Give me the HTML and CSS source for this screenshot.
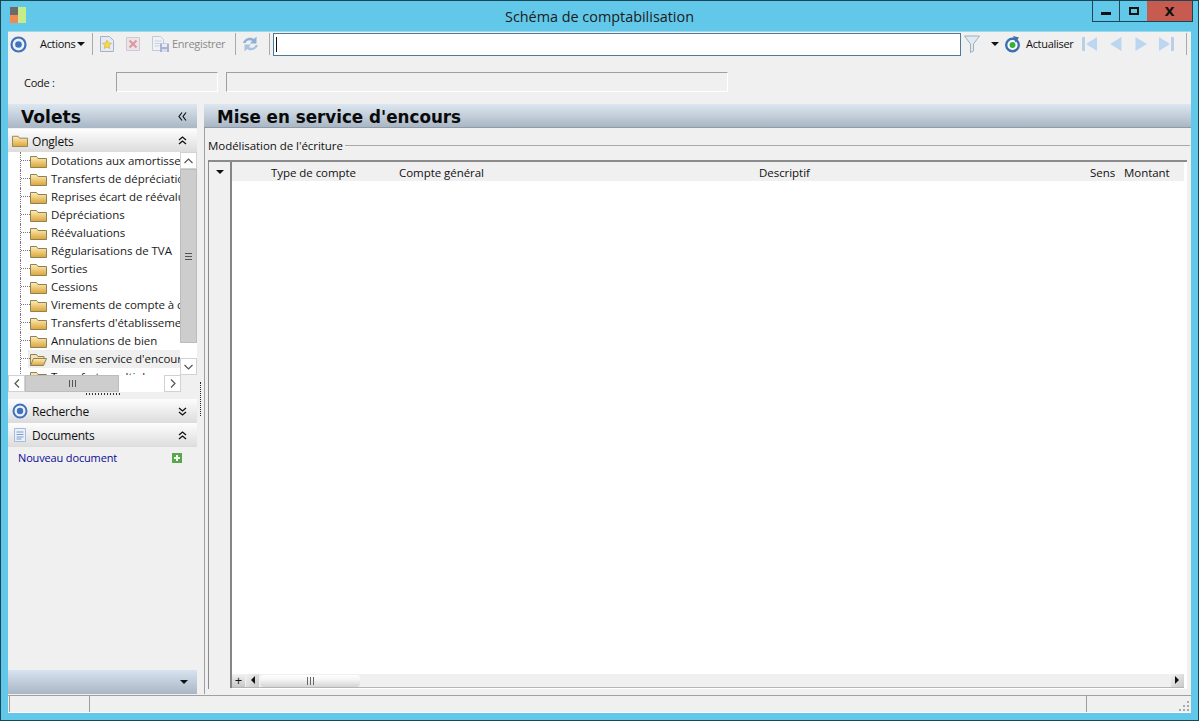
FILE: index.html
```html
<!DOCTYPE html>
<html lang="fr">
<head>
<meta charset="utf-8">
<title>Schéma de comptabilisation</title>
<link rel="stylesheet" href="styles.css">
</head>
<body>
<svg class="defs" width="0" height="0" aria-hidden="true">
  <defs>
    <linearGradient id="fg" x1="0" y1="0" x2="0" y2="1"><stop offset="0" stop-color="#fdeeb8"/><stop offset="1" stop-color="#dca437"/></linearGradient>
    <symbol id="fld" viewBox="0 0 17 13"><path d="M.5 12.500V1.500h6l1.500 2h8.500v9z" fill="url(#fg)" stroke="#8f8157"/></symbol>
    <symbol id="fldo" viewBox="0 0 17 13"><path d="M.5 12.500V1.500h6l1.500 2h6v2" fill="#f3e3b0" stroke="#8f8157"/><path d="M.5 12.500l3-7h13l-3 7z" fill="url(#fg)" stroke="#8f8157"/></symbol>
  </defs>
</svg>
<div class="window">
  <header class="titlebar">
    <svg class="app-icon" width="16" height="16" viewBox="0 0 16 16"><rect width="8" height="8" fill="#6b6b6b"/><rect y="8" width="8" height="8" fill="#f08a50"/><rect x="8" width="8" height="16" fill="#c6ec8a"/></svg>
    <div class="title">Schéma de comptabilisation</div>
    <div class="winbtns">
      <div class="winbtn min"><span class="min-glyph"></span></div>
      <div class="winbtn max"><span class="max-glyph"></span></div>
      <div class="winbtn close">X</div>
    </div>
  </header>
  <div class="client">
    <div class="toolbar">
      <svg class="tool-ring" width="17" height="17" viewBox="0 0 17 17"><circle cx="8.500" cy="8.500" r="7" fill="#eaf1fb" stroke="#3f72b8" stroke-width="2.200"/><circle cx="8.500" cy="8.500" r="3.300" fill="#3f72b8"/></svg>
      <span class="tb-text actions">Actions</span><span class="caret"></span>
      <span class="sep s1"></span>
      <svg class="t-new" width="14" height="16" viewBox="0 0 14 16"><path d="M.5 .5h9l4 4v11H.5z" fill="#e4ebf5" stroke="#a3b2c6"/><path d="M7 4l1.400 2.900 3.100.4-2.300 2.100.6 3.100L7 11l-2.800 1.500.6-3.100L2.500 7.300l3.100-.4z" fill="#f6d84a" stroke="#c9a227" stroke-width=".5"/></svg>
      <svg class="t-del" width="14" height="16" viewBox="0 0 14 16"><path d="M.5 1.500h13v13H.5z" fill="#ece4ea" stroke="#cfc8d2"/><path d="M3.500 4.500l7 7M10.500 4.500l-7 7" stroke="#dc9a9e" stroke-width="2.200"/></svg>
      <svg class="t-save" width="17" height="16" viewBox="0 0 17 16"><path d="M.5 .5h8l3 3v11h-11z" fill="#eef2f7" stroke="#c2cbd8"/><path d="M2.500 5h7M2.500 7.500h7M2.500 10h5" stroke="#c9d2de"/><rect x="8" y="7.500" width="9" height="8.500" fill="#a9b2d2"/><rect x="10" y="8" width="5" height="3" fill="#e8ecf5"/><rect x="10" y="13" width="5" height="3" fill="#d7dcec"/></svg>
      <span class="tb-text muted">Enregistrer</span>
      <span class="sep s2"></span>
      <svg class="t-sync" width="17" height="18" viewBox="0 0 17 18"><path d="M1 8C2 3.500 8 1 12 4l2.500-2.500V8.500H8l2.200-2.500C8 4.500 4.500 5 3.500 8z" fill="#8fb0d2"/><path d="M16 10c-1 4.500-7 7-11 4l-2.500 2.500V9.500H9L6.800 12c2.200 1.500 5.700 1 6.700-2z" fill="#a9c3dd"/></svg>
      <span class="sep s3"></span>
      <div class="search"><span class="cursor"></span></div>
      <svg class="t-filter" width="16" height="18" viewBox="0 0 16 18"><path d="M.5 1h15L9.500 9v7l-3 1.500V9z" fill="#dfeaf3" stroke="#9fb0bd"/></svg>
      <span class="caret c2"></span>
      <svg class="t-refresh" width="17" height="17" viewBox="0 0 17 17"><circle cx="8.500" cy="9" r="6.300" fill="#fff" stroke="#3d6fb0" stroke-width="2.400"/><path d="M9 0l6 1.500-3.500 5z" fill="#3d6fb0"/><circle cx="8.500" cy="9" r="3" fill="#35b03c"/></svg>
      <span class="tb-text refresh-label">Actualiser</span>
      <svg class="nav n1" width="15" height="14" viewBox="0 0 15 14"><rect x="0" y="0" width="3" height="14" fill="#b9d0e6"/><path d="M15 0v14L4 7z" fill="#bcd6f0"/></svg>
      <svg class="nav n2" width="13" height="14" viewBox="0 0 13 14"><path d="M12.500 0v14L1 7z" fill="#bcd6f0"/></svg>
      <svg class="nav n3" width="13" height="14" viewBox="0 0 13 14"><path d="M.5 0v14L12 7z" fill="#bcd6f0"/></svg>
      <svg class="nav n4" width="15" height="14" viewBox="0 0 15 14"><path d="M0 0v14L11 7z" fill="#bcd6f0"/><rect x="12" y="0" width="3" height="14" fill="#b9d0e6"/></svg>
      <span class="sep s4"></span>
    </div>
    <div class="formrow">
      <label class="code-label">Code :</label>
      <div class="field f1"></div>
      <div class="field f2"></div>
    </div>
    <div class="panes">
      <aside class="left">
        <div class="pane-head"><span class="pane-title volets">Volets</span>
          <svg width="9" height="9" viewBox="0 0 9 9"><path d="M4 .5L1 4.500l3 4M8 .5L5 4.500l3 4" fill="none" stroke="#111" stroke-width="1.200"/></svg>
        </div>
        <div class="section">
          <svg class="sec-icon" width="16" height="14" viewBox="0 0 17 13"><use href="#fld"/></svg>
          <span class="sec-label">Onglets</span>
          <svg class="dbl" width="9" height="9" viewBox="0 0 9 9"><path d="M1 4l3.500-3L8 4M1 8l3.500-3L8 8" fill="none" stroke="#111" stroke-width="1.300"/></svg>
        </div>
        <div class="treebox">
          <div class="tree">
            <div class="node"><span class="dots"></span><svg class="folder" width="17" height="13" viewBox="0 0 17 13"><use href="#fld"/></svg><span class="nlabel">Dotations aux amortissements</span></div>
            <div class="node"><span class="dots"></span><svg class="folder" width="17" height="13" viewBox="0 0 17 13"><use href="#fld"/></svg><span class="nlabel">Transferts de dépréciations</span></div>
            <div class="node"><span class="dots"></span><svg class="folder" width="17" height="13" viewBox="0 0 17 13"><use href="#fld"/></svg><span class="nlabel">Reprises écart de réévaluation</span></div>
            <div class="node"><span class="dots"></span><svg class="folder" width="17" height="13" viewBox="0 0 17 13"><use href="#fld"/></svg><span class="nlabel">Dépréciations</span></div>
            <div class="node"><span class="dots"></span><svg class="folder" width="17" height="13" viewBox="0 0 17 13"><use href="#fld"/></svg><span class="nlabel">Réévaluations</span></div>
            <div class="node"><span class="dots"></span><svg class="folder" width="17" height="13" viewBox="0 0 17 13"><use href="#fld"/></svg><span class="nlabel">Régularisations de TVA</span></div>
            <div class="node"><span class="dots"></span><svg class="folder" width="17" height="13" viewBox="0 0 17 13"><use href="#fld"/></svg><span class="nlabel">Sorties</span></div>
            <div class="node"><span class="dots"></span><svg class="folder" width="17" height="13" viewBox="0 0 17 13"><use href="#fld"/></svg><span class="nlabel">Cessions</span></div>
            <div class="node"><span class="dots"></span><svg class="folder" width="17" height="13" viewBox="0 0 17 13"><use href="#fld"/></svg><span class="nlabel">Virements de compte à compte</span></div>
            <div class="node"><span class="dots"></span><svg class="folder" width="17" height="13" viewBox="0 0 17 13"><use href="#fld"/></svg><span class="nlabel">Transferts d'établissement</span></div>
            <div class="node"><span class="dots"></span><svg class="folder" width="17" height="13" viewBox="0 0 17 13"><use href="#fld"/></svg><span class="nlabel">Annulations de bien</span></div>
            <div class="node selected"><span class="dots"></span><svg class="folder" width="17" height="13" viewBox="0 0 17 13"><use href="#fldo"/></svg><span class="nlabel">Mise en service d'encours</span></div>
            <div class="node"><span class="dots"></span><svg class="folder" width="17" height="13" viewBox="0 0 17 13"><use href="#fld"/></svg><span class="nlabel">Transferts multiples</span></div>
          </div>
          <div class="vscroll">
            <div class="sbtn up"><svg width="9" height="6" viewBox="0 0 9 6"><path d="M.5 5l4-4 4 4" fill="none" stroke="#555" stroke-width="1.200"/></svg></div>
            <div class="vthumb"><span class="grip-h"></span></div>
            <div class="vtrack"></div>
            <div class="sbtn down"><svg width="9" height="6" viewBox="0 0 9 6"><path d="M.5 1l4 4 4-4" fill="none" stroke="#555" stroke-width="1.200"/></svg></div>
          </div>
        </div>
        <div class="hscroll">
          <div class="hbtn"><svg width="6" height="9" viewBox="0 0 6 9"><path d="M5 .5l-4 4 4 4" fill="none" stroke="#555" stroke-width="1.200"/></svg></div>
          <div class="hthumb"><span class="grip-v"></span></div>
          <div class="htrack"></div>
          <div class="hbtn"><svg width="6" height="9" viewBox="0 0 6 9"><path d="M1 .5l4 4-4 4" fill="none" stroke="#555" stroke-width="1.200"/></svg></div>
        </div>
        <div class="hgrip"></div>
        <div class="section sec-search">
          <svg class="sec-icon" width="16" height="16" viewBox="0 0 16 16"><circle cx="8" cy="8" r="6.500" fill="#eaf1fb" stroke="#3f72b8" stroke-width="2"/><circle cx="8" cy="8" r="3.200" fill="#3f72b8"/></svg>
          <span class="sec-label">Recherche</span>
          <svg class="dbl" width="9" height="9" viewBox="0 0 9 9"><path d="M1 1l3.500 3L8 1M1 5l3.500 3L8 5" fill="none" stroke="#111" stroke-width="1.300"/></svg>
        </div>
        <div class="section">
          <svg class="sec-icon" width="16" height="16" viewBox="0 0 16 16"><path d="M2.500 1.500h11v13h-11z" fill="#eaf1fa" stroke="#a8bcd8"/><path d="M4.500 5h7M4.500 7.500h7M4.500 10h7M4.500 12h5" stroke="#7d9ccb"/></svg>
          <span class="sec-label">Documents</span>
          <svg class="dbl" width="9" height="9" viewBox="0 0 9 9"><path d="M1 4l3.500-3L8 4M1 8l3.500-3L8 8" fill="none" stroke="#111" stroke-width="1.300"/></svg>
        </div>
        <div class="docs">
          <span class="doclink">Nouveau document</span>
          <svg width="10" height="10" viewBox="0 0 10 10"><rect width="10" height="10" fill="#56a84a"/><path d="M5 2v6M2 5h6" stroke="#fff" stroke-width="2"/></svg>
        </div>
        <div class="left-fill"></div>
        <div class="pane-foot"><span class="caret foot-caret"></span></div>
      </aside>
      <div class="splitter"><span class="vgrip"></span></div>
      <main class="right">
        <div class="pane-head"><span class="pane-title">Mise en service d'encours</span></div>
        <div class="right-body">
          <div class="group-head"><span class="group-label">Modélisation de l'écriture</span><span class="group-line"></span></div>
          <div class="grid">
            <div class="grid-row-head">
              <div class="corner"><span class="caret"></span></div>
            </div>
            <div class="grid-main">
              <div class="grid-head">
                <span class="col c-type">Type de compte</span>
                <span class="col c-cpt">Compte général</span>
                <span class="col c-desc">Descriptif</span>
                <span class="col c-sens">Sens</span>
                <span class="col c-mnt">Montant</span>
              </div>
              <div class="grid-body"></div>
              <div class="grid-scroll">
                <div class="plus">+</div>
                <span class="gs-left"></span>
                <div class="gs-thumb"><span class="gs-grip"></span></div>
                <div class="gs-fill"></div>
                <span class="gs-right"></span>
              </div>
            </div>
          </div>
        </div>
      </main>
    </div>
    <footer class="status">
      <div class="st st1"></div>
      <div class="st st2"></div>
      <div class="st st3">
        <svg width="12" height="12" viewBox="0 0 12 12" fill="#a9a9a9"><rect x="9" y="1" width="2" height="2"/><rect x="5" y="5" width="2" height="2"/><rect x="9" y="5" width="2" height="2"/><rect x="1" y="9" width="2" height="2"/><rect x="5" y="9" width="2" height="2"/><rect x="9" y="9" width="2" height="2"/></svg>
      </div>
    </footer>
  </div>
</div>
</body>
</html>
```
FILE: styles.css
```css
* { box-sizing: border-box; }
html, body { margin: 0; padding: 0; }
body { font-family: "Open Sans", "Noto Sans", "Liberation Sans", sans-serif; font-size: 11.500px; letter-spacing: -.05px; color: #111; overflow: hidden; }
svg { display: block; flex: none; }
.defs { position: absolute; }

.window { width: 1199px; height: 721px; background: #62c8ea; border: 1px solid #1d4654; display: flex; flex-direction: column; padding: 0 7px 7px 7px; }

.titlebar { height: 30px; flex: none; display: flex; align-items: flex-start; position: relative; margin: 0 -7px; }
.app-icon { margin: 6px 0 0 9px; }
.title { position: absolute; left: 0; right: 0; top: 6px; text-align: center; font-size: 14.400px; letter-spacing: 0; line-height: 19px; color: #1b1b1b; }
.winbtns { margin-left: auto; margin-right: 5px; display: flex; height: 21px; border: 1px solid #1d4654; border-top: 0; position: relative; }
.winbtn { display: flex; align-items: center; justify-content: center; height: 20px; }
.min { width: 27px; border-right: 1px solid #1d4654; }
.min-glyph { width: 10px; height: 3px; background: #111; margin-top: 5px; }
.max { width: 27px; }
.max-glyph { width: 10px; height: 8px; border: 2px solid #111; margin-top: -1px; }
.close { width: 45px; background: #c75b50; font-weight: 700; font-size: 13px; color: #111; font-family: "DejaVu Sans", sans-serif; }

.client { flex: 1; background: #f0f0f0; display: flex; flex-direction: column; min-height: 0; border-top: 1px solid #9fd6ea; }

.toolbar { height: 26px; flex: none; display: flex; align-items: center; padding-bottom: 2px; }
.tool-ring { margin-left: 2px; }
.tb-text { font-size: 11px; line-height: 16px; letter-spacing: -.3px; white-space: nowrap; flex: none; }
.actions { margin-left: 13px; width: 34px; }
.caret { width: 0; height: 0; border: 4px solid transparent; border-top-color: #111; border-bottom-width: 0; display: inline-block; flex: none; }
.toolbar > .caret { margin-left: 3px; }
.sep { width: 1px; height: 22px; background: #a9a9a9; flex: none; }
.s1 { margin-left: 7px; }
.t-new { margin-left: 7px; }
.t-del { margin-left: 12px; }
.t-save { margin-left: 12px; }
.muted { color: #8a8a8a; margin-left: 3px; width: 53px; }
.s2 { margin-left: 10px; }
.t-sync { margin-left: 6px; }
.s3 { margin-left: 10px; }
.search { width: 688px; height: 23px; margin-left: 3px; background: #fff; border: 1px solid #4d7a99; display: flex; align-items: center; padding-left: 2px; flex: none; }
.cursor { width: 1px; height: 15px; background: #111; }
.t-filter { margin-left: 3px; }
.toolbar > .c2 { margin-left: 11px; }
.t-refresh { margin-left: 5px; }
.refresh-label { margin-left: 5px; width: 46px; }
.n1 { margin-left: 10px; }
.n2 { margin-left: 12px; }
.n3 { margin-left: 13px; }
.n4 { margin-left: 11px; }
.s4 { margin-left: 12px; }

.formrow { height: 46px; flex: none; display: flex; align-items: flex-start; padding-top: 14px; }
.code-label { margin: 3px 0 0 16px; width: 92px; font-size: 11px; letter-spacing: -.25px; line-height: 16px; }
.field { height: 20px; background: #f0f0f0; border: 1px solid #a0a0a0; border-right-color: #fff; border-bottom-color: #fff; }
.f1 { width: 102px; }
.f2 { width: 502px; margin-left: 8px; }

.panes { flex: 1; display: flex; min-height: 0; margin-bottom: 1px; }
.left { width: 189px; flex: none; display: flex; flex-direction: column; }
.splitter { width: 7px; flex: none; position: relative; }
.vgrip { position: absolute; left: 3px; top: 278px; width: 1px; height: 34px; border-left: 1px dotted #222; }
.right { flex: 1; display: flex; flex-direction: column; min-width: 0; }

.pane-head { height: 24px; flex: none; display: flex; align-items: center; justify-content: space-between; background: linear-gradient(#dde7f1, #a9b6c4); border-bottom: 1px solid #8f9aa6; padding-right: 10px; }
.left .pane-head { border-bottom: 0; }
.pane-title { font-family: "DejaVu Sans", sans-serif; font-weight: 700; font-size: 16.750px; letter-spacing: 0; line-height: 24px; margin-top: 2px; color: #0a0a0a; padding-left: 13px; white-space: nowrap; }
.volets { font-size: 17.100px; }

.section { height: 24px; flex: none; display: flex; align-items: center; background: linear-gradient(#fdfdfd, #dcdcdc); padding: 0 10px 0 4px; }
.left > .pane-head + .section { margin-top: 1px; height: 23px; }
.sec-label { margin: 2px 0 0 4px; flex: 1; line-height: 16px; font-size: 12px; letter-spacing: -.2px; }

.treebox { height: 223px; flex: none; display: flex; background: #fff; }
.tree { flex: 1; min-width: 0; overflow: hidden; }
.node { height: 18px; display: flex; align-items: center; white-space: nowrap; padding-left: 12px; }
.dots { width: 10px; height: 18px; flex: none; border-left: 1px dotted #777; background: repeating-linear-gradient(90deg, #777 0 1px, transparent 1px 2px) 0 8px / 100% 1px no-repeat; }
.nlabel { margin-left: 4px; line-height: 16px; color: #1a1a1a; }
.selected { background: linear-gradient(90deg, #fff 0 20px, #e9e9e9 20px, #efefef 21px); }

.vscroll { width: 17px; flex: none; display: flex; flex-direction: column; background: #fff; }
.sbtn { height: 17px; flex: none; border: 1px solid #d2d2d2; display: flex; align-items: center; justify-content: center; background: #fff; }
.vthumb { height: 174px; flex: none; background: #cdcdcd; border: 1px solid #bcbcbc; display: flex; align-items: center; justify-content: center; }
.grip-h { width: 7px; height: 7px; background: repeating-linear-gradient(#555 0 1px, transparent 1px 3px); }
.vtrack { flex: 1; }

.hscroll { height: 17px; flex: none; display: flex; width: 173px; background: #fff; }
.hbtn { width: 17px; flex: none; border: 1px solid #d2d2d2; display: flex; align-items: center; justify-content: center; }
.hthumb { width: 94px; flex: none; background: #cdcdcd; border: 1px solid #bcbcbc; display: flex; align-items: center; justify-content: center; }
.grip-v { width: 7px; height: 7px; background: repeating-linear-gradient(90deg, #555 0 1px, transparent 1px 3px); }
.htrack { flex: 1; }

.hgrip { height: 7px; flex: none; background: repeating-linear-gradient(90deg, #333 0 1px, transparent 1px 3px) 78px 1px / 35px 2px no-repeat; }

.docs { height: 21px; flex: none; display: flex; align-items: center; justify-content: space-between; padding: 0 15px 0 10px; }
.doclink { color: #0a0a96; font-size: 11px; letter-spacing: -.15px; line-height: 16px; margin-top: 1px; }
.left-fill { flex: 1; }
.pane-foot { height: 24px; flex: none; display: flex; align-items: center; justify-content: flex-end; background: linear-gradient(#d7e3ef, #a9b6c4); padding-right: 9px; }

.right-body { flex: 1; display: flex; flex-direction: column; border-left: 1px solid #a0a0a0; padding-left: 3px; padding-right: 1px; min-height: 0; }
.group-head { height: 32px; flex: none; display: flex; align-items: center; padding-top: 3px; }
.group-label { line-height: 16px; white-space: nowrap; }
.group-line { flex: 1; height: 1px; background: #a9a9a9; margin-left: 2px; }
.grid { flex: 1; display: flex; border-style: solid; border-color: #8b8b8b; border-width: 2px 0 0 1px; min-height: 0; margin: 0 3px 5px 0; }
.grid-row-head { width: 23px; flex: none; border-right: 2px solid #858585; background: #f0f0f0; padding-top: 5px; margin-bottom: 1px; }
.corner { height: 14px; display: flex; justify-content: center; padding-top: 3px; }
.grid-main { flex: 1; min-width: 0; display: flex; flex-direction: column; background: #fff; padding-right: 3px; }
.grid-head { height: 19px; flex: none; background: #f0f0f0; position: relative; }
.col { position: absolute; top: 3px; line-height: 16px; white-space: nowrap; }
.c-type { left: 39px; }
.c-cpt { left: 167px; }
.c-desc { left: 527px; }
.c-sens { left: 858px; }
.c-mnt { left: 892px; }
.grid-body { flex: 1; }
.grid-scroll { height: 14px; flex: none; display: flex; align-items: center; background: #f0f0f0; border-bottom: 1px solid #b5b5b5; margin-bottom: 1px; }
.plus { height: 13px; width: 13px; flex: none; text-align: center; font-size: 13px; line-height: 13px; background: linear-gradient(#f2f2f2, #c8c8c8); }
.gs-left { width: 13px; height: 13px; margin-left: 1px; flex: none; background: linear-gradient(135deg, #f2f2f2, #c8c8c8); position: relative; }
.gs-left::after { content: ""; position: absolute; left: 5px; top: 2px; width: 0; height: 0; border: 4px solid transparent; border-right-color: #111; border-left-width: 0; }
.gs-thumb { width: 100px; height: 12px; margin-left: 1px; border-radius: 4px; background: linear-gradient(#fff, #f4f4f4 40%, #d4d4d4); display: flex; align-items: center; justify-content: center; flex: none; }
.gs-grip { width: 7px; height: 8px; background: repeating-linear-gradient(90deg, #666 0 1px, transparent 1px 3px); }
.gs-fill { flex: 1; }
.gs-right { width: 13px; height: 13px; flex: none; background: linear-gradient(135deg, #f2f2f2, #c8c8c8); position: relative; }
.gs-right::after { content: ""; position: absolute; left: 4px; top: 2px; width: 0; height: 0; border: 4px solid transparent; border-left-color: #111; border-right-width: 0; }

.status { height: 18px; flex: none; display: flex; border-top: 1px solid #a0a0a0; padding-left: 1px; background: #f0f0f0; border-bottom: 1px solid #fff; }
.st { height: 100%; border-left: 1px solid #a0a0a0; }
.st1 { width: 80px; }
.st2 { width: 997px; }
.st3 { flex: 1; display: flex; align-items: flex-end; justify-content: flex-end; padding-right: 1px; }
```
